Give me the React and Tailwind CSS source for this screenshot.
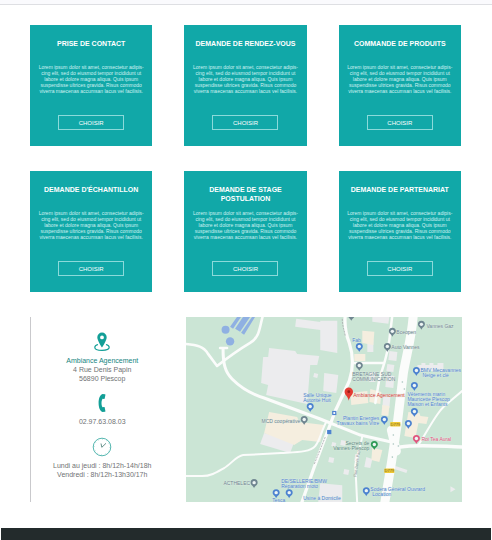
const LOREM = [
  'Lorem ipsum dolor sit amet, consectetur adipis-',
  'cing elit, sed do eiusmod tempor incididunt ut',
  'labore et dolore magna aliqua. Quis ipsum',
  'suspendisse ultrices gravida. Risus commodo',
  'viverra maecenas accumsan lacus vel facilisis.',
];

const CARDS = [
  'PRISE DE CONTACT',
  'DEMANDE DE RENDEZ-VOUS',
  'COMMANDE DE PRODUITS',
  "DEMANDE D'ÉCHANTILLON",
  'DEMANDE DE STAGE POSTULATION',
  'DEMANDE DE PARTENARIAT',
];

const GRAY = '#6f8590';
const BLUE = '#4c82d0';
const GREEN = '#57877a';
const PINK = '#e0567f';

const PINS = [
  [235, 8, GRAY], [206, 15, GRAY], [201, 30, GRAY], [173, 30, BLUE], [173, 49, GRAY],
  [230, 54, BLUE], [228, 69, BLUE], [198, 103, BLUE], [228, 95, BLUE], [222, 107, BLUE],
  [188, 128, '#2f9b57'], [230, 122, PINK], [180, 174, BLUE], [118, 103, GRAY],
  [124, 90, BLUE], [68, 166, GRAY], [90, 176, BLUE], [103, 176, BLUE], [165, -1, GRAY],
];

const LABELS = [
  [240, 11, 'Vannes Gaz', GRAY, 'start'],
  [210, 17, 'Bceopen', GRAY, 'start'],
  [205, 32, 'Auto Vannes', GRAY, 'start'],
  [166, 25, 'Fab', BLUE, 'start'],
  [166, 59, 'BRETAGNE SUD', GRAY, 'start'],
  [166, 64, 'COMMUNICATION', GRAY, 'start'],
  [234, 55, 'BMV Mecavannes', BLUE, 'start'],
  [236, 60, 'Neige et clé', BLUE, 'start'],
  [221, 79, 'Vêtements marin', BLUE, 'start'],
  [221, 84, 'Mauricette Plescop', BLUE, 'start'],
  [221, 89, 'Maison et Enfants', BLUE, 'start'],
  [117, 80, 'Salle Unique', BLUE, 'start'],
  [117, 85, 'Autorité Huit', BLUE, 'start'],
  [114, 106, 'MCD coopérative', GRAY, 'end'],
  [193, 103, 'Plantin Energies', BLUE, 'end'],
  [193, 108, 'Travaux bains Vitre', BLUE, 'end'],
  [183, 128, 'Secrets de', GREEN, 'end'],
  [183, 133, 'Vannes-Plescop', GREEN, 'end'],
  [235, 124, 'Roi Tea Aural', PINK, 'start'],
  [64, 168, 'ACTHELEC', GRAY, 'end'],
  [95, 166, 'DE/SELLERIE/BMW', BLUE, 'start'],
  [95, 171, 'Réparation moto', BLUE, 'start'],
  [117, 183, 'Usine à Domicile', BLUE, 'start'],
  [86, 185, 'Tesca', BLUE, 'start'],
  [184, 174, 'Sodera Général Ouvrard', BLUE, 'start'],
  [186, 179, 'Location', BLUE, 'start'],
];

function Card({ title }) {
  return (
    <article className="flex flex-col items-center bg-[#11a8a8] px-2 pt-[14px] pb-4 text-center text-white">
      <h2 className="h-[18px] text-[7px] leading-[9px] font-bold">{title}</h2>
      <p className="mt-[7px] text-[5px] leading-[6px] whitespace-nowrap text-[#d0f2f2]">
        {LOREM.map((line) => (
          <span key={line} className="block">{line}</span>
        ))}
      </p>
      <button type="button" className="mt-[21px] h-[15px] w-[66px] border border-[#8bdada] text-[6px] leading-none">
        CHOISIR
      </button>
    </article>
  );
}

function LocationIcon() {
  return (
    <svg viewBox="0 0 16 20" className="h-5 w-4" fill="none" aria-hidden="true">
      <path d="M4 12.5C1.8 13.1.8 14.1.8 15.2c0 2 3.2 3.2 7.2 3.2s7.200-1.200 7.200-3.200c0-1.100-1-2.100-3.200-2.700" stroke="#139f97" strokeWidth="1.200" />
      <path fillRule="evenodd" d="M8 .6a4.700 4.700 0 0 0-4.700 4.700C3.300 8.800 8 15.600 8 15.600s4.700-6.800 4.700-10.300A4.700 4.700 0 0 0 8 .6Zm0 2.900a1.900 1.900 0 1 1 0 3.800 1.900 1.900 0 0 1 0-3.800Z" fill="#139f97" />
    </svg>
  );
}

function PhoneIcon() {
  return (
    <svg viewBox="0 0 8 20" className="h-5 w-2" aria-hidden="true">
      <path d="M4.500 1C1.800 2.200.6 5.700.6 10s1.200 7.800 3.900 9l2.500-.3c.4-.1.500-.4.400-.7l-.7-3.600c-.1-.3-.4-.5-.7-.4l-1.500.3C3.700 12.700 3.500 11.500 3.500 10s.2-2.700 1-4.300l1.500.3c.3.100.6-.1.700-.4L7.400 2c.1-.3 0-.6-.4-.7L4.500 1Z" fill="#139f97" />
    </svg>
  );
}

function ClockIcon() {
  return (
    <svg viewBox="0 0 20 20" className="size-5" fill="none" stroke="#2ba49c" aria-hidden="true">
      <circle cx="10" cy="10" r="8.800" strokeWidth=".8" />
      <circle cx="10" cy="10" r="7.700" strokeWidth=".7" strokeDasharray=".4 3.630" />
      <path d="M14 6.300 9.800 10.300 9 6.500" stroke="#42776f" strokeWidth=".8" />
    </svg>
  );
}

function Map() {
  return (
    <svg
      viewBox="0 0 276 185"
      preserveAspectRatio="xMidYMid slice"
      className="block h-[185px] w-full"
      role="img"
      aria-label="Plan d'accès Ambiance Agencement"
    >
      <rect width="276" height="185" fill="#cbe5d5" />

      <g fill="#ececee">
        <path d="m83 31 26 3 2 3 22 2-2 9h-7l-3 39-41-9 2-10-7-2 2-26h5Z" />
        <path d="m110 2 30 4v8l-31-4Z" />
        <path d="M134 4h17v32l-17-3Z" />
        <path d="m138 56 14 2-2 18-13-2Z" />
        <path d="m78 116 30 9-4 11-30-9Z" />
        <path d="m134 166 22 2v17h-24Z" />
        <path d="m128 56 4 1-1 4-4-1ZM186 0h17l-1 7-16-2ZM181 23h6v12h-6ZM203 34l8 1-1 9-8-1ZM201 47l7 1-1 7-7-1ZM200 58l8 1-1 12-8-1ZM197 79l7 1-1 11-7-1ZM183 55h6v10h-6Z" />
        <path d="M231 48h4v-2h4v2h4v-2h4v2h4v-2h6v8h-26ZM209 149l12 4-1 3-12-4ZM155 123l5 1-1 5-5-1ZM143 140l5 1-1 5-5-1ZM158 152l5 1-1 5-5-1ZM180 140l6 2-2 9-6-1Z" />
        <path d="m264 169 5 3-5 3ZM146 125l4 1-1 4-4-1ZM169 137l4 1-1 7-4-1Z" />
      </g>
      <g fill="#f5eedf">
        <path d="m83 95 28 5 2 5 25 3-4 17-18-2-8 5-30-12Z" />
        <path d="m176 14 12 1-1 13-11-2ZM168 37h11v7h-11ZM164 76l17-2 1 12-17 2ZM184 72l11 3-1 12-11-2Z" />
        <path d="m222 95 11 1 1 3 8 1-2 7-8-1-3 15-11-2ZM186 131l10 2-3 12-8-2ZM196 88l7 1-1 10-7-1Z" />
      </g>

      <g fill="#8fb0e2">
        <circle cx="39.500" cy="13" r="4" />
        <circle cx="44" cy="24.500" r="4.200" />
        <path d="M51 0h4L47 12l-3-2ZM57 0h7L54 15l-5-3ZM66 0h3L58 18l-3-2Z" />
      </g>

      <g fill="none" stroke="#fbfcfb" strokeLinecap="round" strokeLinejoin="round">
        <path d="M-2 27C12 28 18 30 22 37l9 12C40 42 54 32 64 26S73 11 77-2" strokeWidth="2.600" />
        <path d="M37 32c0 15 2 23 9 30s19 15 32 19l56 21 40 16 31 7" strokeWidth="3" />
        <path d="M34 31h7" strokeWidth="2.500" />
        <path d="M-2 159h18c9 0 15-4 22-8s12-12 19-13l38-2c16-1 29-1 34-7s6-15 11-24" strokeWidth="2" />
        <path d="M159-2c-1 10 0 18 4 28 5 15 4 26 0 38l-14 30-12 32-9 24-13 37" strokeWidth="3.200" />
        <path d="M166 46h32c2-7 4-15 5-23l3-25M198 46l-5 16-4 24" strokeWidth="2.500" />
        <path d="M176 119c-2 12-6 20-7 29l2 40" strokeWidth="2" />
        <path d="M214 130c16-3 36-1 64 0" strokeWidth="3.500" />
        <path d="m278 72-20 17c-8 7-14 20-26 39" strokeWidth="2" />
        <path d="M227-4c-1 22-7 42-10 60l-6 50-6 40-7 42" strokeWidth="9" />
        <path d="m205 113 5 21" strokeWidth="9" />
      </g>
      <path d="M156 2c0 7 2 11 3 17M139 120l-11 27" fill="none" stroke="#a9a9ac" strokeWidth=".8" strokeDasharray="2 1" />
      <text transform="translate(170 160) rotate(-82)" fontSize="4" fill="#8d9295">Rue Denis Papin</text>
      <g fill="#a8c4be">
        <circle cx="216" cy="65" r=".8" />
        <circle cx="218" cy="72" r=".8" />
        <circle cx="207" cy="118" r=".8" />
        <circle cx="207" cy="127" r=".8" />
        <circle cx="212" cy="129" r=".8" />
        <circle cx="206" cy="140" r=".8" />
      </g>

      <g fill="#efc936">
        <rect x="204" y="105" width="10" height="4.500" rx=".6" />
        <rect x="198" y="151.500" width="10" height="4.500" rx=".6" />
      </g>
      <g fontSize="4" fill="#76652a" textAnchor="middle">
        <text x="209" y="109">D779</text>
        <text x="203" y="155">D779</text>
      </g>
      <g fill="#fff" stroke={BLUE} strokeWidth="1.200">
        <rect x="146.500" y="94.500" width="3" height="3" />
        <rect x="141.500" y="113.500" width="3" height="3" fill={BLUE} />
      </g>

      <g fontSize="5" stroke="#e4efe8" strokeWidth=".4" paintOrder="stroke">
        {LABELS.map(([x, y, text, color, anchor]) => (
          <text key={text} x={x} y={y} fill={color} textAnchor={anchor}>{text}</text>
        ))}
        <text x="167" y="80" fill="#dc3c36">Ambiance Agencement</text>
      </g>

      {PINS.map(([x, y, color]) => (
        <g key={`${x}-${y}`} transform={`translate(${x} ${y})`}>
          <path d="M0-4A3.500 3.500 0 0 0-3.500-.5C-3.500 2-.7 2.600 0 5 .7 2.600 3.500 2 3.500-.5A3.500 3.500 0 0 0 0-4Z" fill={color} />
          <circle cy="-.5" r="1.700" fill="#eef5f4" />
        </g>
      ))}
      <path d="M162.500 70.500a4.200 4.200 0 0 0-4.200 4.200c0 3.600 3.500 4.300 4.200 9 .7-4.700 4.200-5.400 4.200-9a4.200 4.200 0 0 0-4.200-4.200Z" fill="#e33b32" />
      <circle cx="162.500" cy="74.700" r="1.400" fill="#991d18" />
    </svg>
  );
}

export default function App() {
  return (
    <div className="bg-white font-['Liberation_Sans',Arial,sans-serif]">
      <header className="h-[5px] border-b border-[#dedfe3] bg-[#fafafd]" />
      <main className="pt-5 pb-[26px]">
        <section className="grid grid-cols-3 gap-x-8 gap-y-[25px] pr-[31px] pl-[30px]">
          {CARDS.map((title) => (
            <Card key={title} title={title} />
          ))}
        </section>
        <section className="mt-[25px] grid grid-cols-[9fr_16fr] px-[30px]">
          <address className="flex flex-col items-center border-l border-[#c9c9cc] pt-[15px] pr-3 text-center text-[7px] leading-[9px] text-[#707274] not-italic">
            <LocationIcon />
            <p className="mt-1">
              <strong className="block font-normal text-[#16857f]">Ambiance Agencement</strong>
              4 Rue Denis Papin
              <br />
              56890 Plescop
            </p>
            <div className="mt-[10px]"><PhoneIcon /></div>
            <a href="tel:0297630803" className="mt-1">02.97.63.08.03</a>
            <div className="mt-[11px]"><ClockIcon /></div>
            <p className="mt-1">
              Lundi au jeudi : 8h/12h-14h/18h
              <br />
              Vendredi : 8h/12h-13h30/17h
            </p>
          </address>
          <Map />
        </section>
      </main>
      <footer className="mx-px h-3 bg-[#232b2c]" />
    </div>
  );
}
